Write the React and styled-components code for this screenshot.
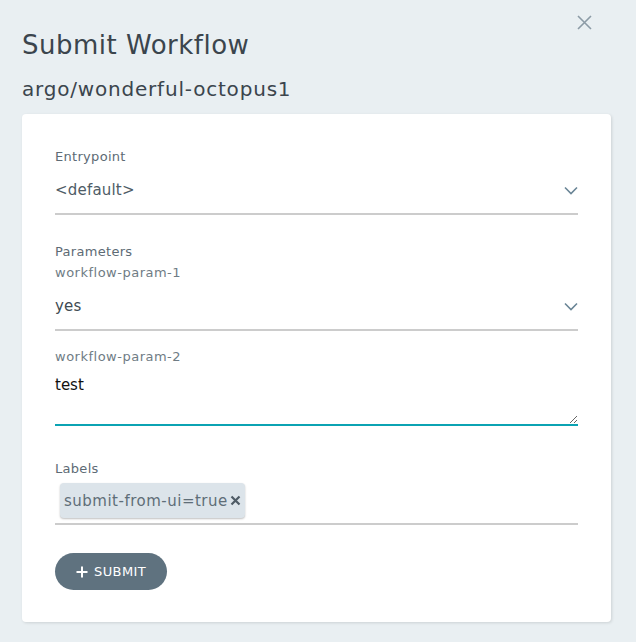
import styled, { createGlobalStyle } from "styled-components";

const GlobalStyle = createGlobalStyle`
    html, body {
        margin: 0;
        padding: 0;
        background: #e9eff2;
        font-family: "DejaVu Sans", "Noto Sans", sans-serif;
    }
    * { box-sizing: border-box; }
`

const Chevron = () => (
    <svg width="14" height="9" viewBox="0 0 14 9">
        <path d="M1 1.5 L7 7.5 L13 1.5" fill="none" stroke="#6a8596" strokeWidth="1.6" />
    </svg>
)

const App = () => {
    return (
        <>
            <GlobalStyle />
            <Panel>
                <CloseButton aria-label="close">
                    <svg width="15" height="15" viewBox="0 0 15 15">
                        <path d="M1 1 L14 14 M14 1 L1 14" stroke="#8c9ba6" strokeWidth="1.6" />
                    </svg>
                </CloseButton>
                <Title>Submit Workflow</Title>
                <Subtitle>argo/wonderful-octopus1</Subtitle>

                <Card>
                    <Field>
                        <Label>Entrypoint</Label>
                        <Select>
                            <SelectValue>&lt;default&gt;</SelectValue>
                            <Chevron />
                        </Select>
                    </Field>

                    <Field>
                        <Label>Parameters</Label>
                        <SubLabel>workflow-param-1</SubLabel>
                        <Select>
                            <SelectValue dark>yes</SelectValue>
                            <Chevron />
                        </Select>
                    </Field>

                    <Field>
                        <SubLabel>workflow-param-2</SubLabel>
                        <TextArea defaultValue="test" />
                    </Field>

                    <Field>
                        <Label>Labels</Label>
                        <TagsBox>
                            <Tag>
                                submit-from-ui=true
                                <TagRemove>
                                    <svg width="11" height="11" viewBox="0 0 11 11">
                                        <path d="M1.5 1.5 L9.5 9.5 M9.5 1.5 L1.5 9.5" stroke="#4e5b65" strokeWidth="2.2" />
                                    </svg>
                                </TagRemove>
                            </Tag>
                        </TagsBox>
                    </Field>

                    <SubmitButton type="button">
                        <svg width="12" height="12" viewBox="0 0 12 12">
                            <path d="M6 0.5 V11.5 M0.5 6 H11.5" stroke="#fff" strokeWidth="2" />
                        </svg>
                        SUBMIT
                    </SubmitButton>
                </Card>
            </Panel>
        </>
    )
}

const Panel = styled.div`
    position: relative;
    width: 636px;
    height: 642px;
    padding: 26px 25px 20px 22px;
`

const CloseButton = styled.button`
    position: absolute;
    top: 15px;
    right: 44px;
    border: none;
    background: none;
    padding: 0;
    cursor: pointer;
`

const Title = styled.h1`
    margin: 0;
    font-size: 26px;
    font-weight: 400;
    letter-spacing: 0.5px;
    line-height: 38px;
    color: #3b454d;
`

const Subtitle = styled.h2`
    margin: 10px 0 0;
    font-size: 20px;
    font-weight: 400;
    letter-spacing: 0.8px;
    line-height: 30px;
    color: #3b454d;
`

const Card = styled.div`
    display: flex;
    flex-direction: column;
    align-items: flex-start;
    margin-top: 10px;
    background: #fff;
    border-radius: 4px;
    box-shadow: 1px 1px 3px rgba(0, 0, 0, 0.12);
    padding: 32px 33px;
    height: 508px;
`

const Field = styled.div`
    align-self: stretch;
    & + & {
        margin-top: 26px;
    }
    &:nth-child(3) {
        margin-top: 15px;
    }
    &:nth-child(4) {
        margin-top: 32px;
    }
`

const Label = styled.div`
    font-size: 13px;
    line-height: 21px;
    letter-spacing: 0.3px;
    color: #5d6b75;
`

const SubLabel = styled(Label)`
    letter-spacing: 0.5px;
    color: #6f7c85;
`

const Select = styled.div`
    display: flex;
    align-items: center;
    justify-content: space-between;
    height: 48px;
    border-bottom: 2px solid #cccccc;
`

const SelectValue = styled.span`
    font-size: 15px;
    letter-spacing: 0.2px;
    color: ${({ dark }) => (dark ? "#3e4a52" : "#4e5c66")};
`

const TextArea = styled.textarea`
    display: block;
    width: 100%;
    height: 59px;
    border: none;
    border-bottom: 2px solid #0ba3b3;
    outline: none;
    resize: vertical;
    padding: 8px 0 0;
    font-family: "DejaVu Sans", sans-serif;
    font-size: 15px;
    line-height: 20px;
    color: #111;
`

const TagsBox = styled.div`
    display: flex;
    padding: 4px 0 5px 5px;
    border-bottom: 2px solid #cccccc;
`

const Tag = styled.span`
    display: inline-flex;
    align-items: center;
    height: 35px;
    padding: 0 4px 0 4px;
    background: #dce4ea;
    border-radius: 4px;
    box-shadow: 0 1px 2px rgba(0, 0, 0, 0.25);
    font-size: 15px;
    letter-spacing: 0.5px;
    color: #5f6e78;
`

const TagRemove = styled.span`
    display: inline-flex;
    margin-left: 2px;
`

const SubmitButton = styled.button`
    margin-top: 28px;
    display: inline-flex;
    align-items: center;
    gap: 6px;
    height: 37px;
    padding: 0 21px;
    border: none;
    border-radius: 19px;
    background: #5f727f;
    color: #fff;
    font-family: "DejaVu Sans", sans-serif;
    font-size: 13px;
    letter-spacing: 0.4px;
    cursor: pointer;
`

export default App;
